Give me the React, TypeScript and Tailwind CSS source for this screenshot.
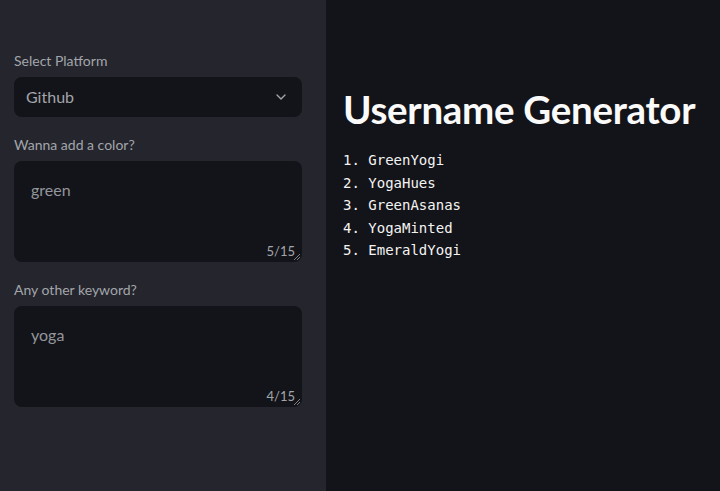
import { ChevronDown } from "lucide-react";

const font = { fontFamily: "Lato, 'Noto Sans', sans-serif" };

function Area({ label, value, max }: { label: string; value: string; max: number }) {
  return (
    <div className="flex flex-col">
      <label className="text-[14px] text-[#a3a5ab] mb-[7px] leading-[18px]">{label}</label>
      <div className="relative h-[101px] rounded-[8px] bg-[#131419]">
        <div className="pt-[19px] pl-[17px] text-[16px] text-[#94969c] leading-[20px]">{value}</div>
        <span className="absolute right-[7px] bottom-[1px] text-[13px] text-[#a3a5ab]">
          {value.length}/{max}
        </span>
        <svg className="absolute right-[2px] bottom-[2px]" width="6" height="6" viewBox="0 0 6 6">
          <path d="M0 6 L6 0 M3 6 L6 3" stroke="#9a9ca2" strokeWidth="0.8" />
        </svg>
      </div>
    </div>
  );
}

export default function App() {
  const names = ["GreenYogi", "YogaHues", "GreenAsanas", "YogaMinted", "EmeraldYogi"];

  return (
    <div className="flex w-[720px] h-[491px] overflow-hidden" style={font}>
      <aside className="w-[326px] shrink-0 bg-[#24252d] pl-[14px] pr-[24px] pt-[52px] flex flex-col gap-[19px]">
        <div className="flex flex-col">
          <label className="text-[14px] text-[#a3a5ab] mb-[7px] leading-[18px]">Select Platform</label>
          <div className="h-[40px] rounded-[8px] bg-[#131419] flex items-center justify-between pl-[12px] pr-[13px]">
            <span className="text-[16px] text-[#a3a5ab]">Github</span>
            <ChevronDown size={16} color="#a3a5ab" strokeWidth={2} />
          </div>
        </div>
        <Area label="Wanna add a color?" value="green" max={15} />
        <Area label="Any other keyword?" value="yoga" max={15} />
      </aside>
      <main className="flex-1 bg-[#131419] pl-[17px] pt-[86px]">
        <h1 className="text-[38.5px] font-bold text-[#fafafa] leading-[46px] tracking-[-0.3px]">Username Generator</h1>
        <ol className="mt-[17px] text-[14px] text-[#f3f3f3] leading-[22.5px]" style={{ fontFamily: "'DejaVu Sans Mono', monospace" }}>
          {names.map((n, i) => (
            <li key={n}>
              {i + 1}. {n}
            </li>
          ))}
        </ol>
      </main>
    </div>
  );
}
